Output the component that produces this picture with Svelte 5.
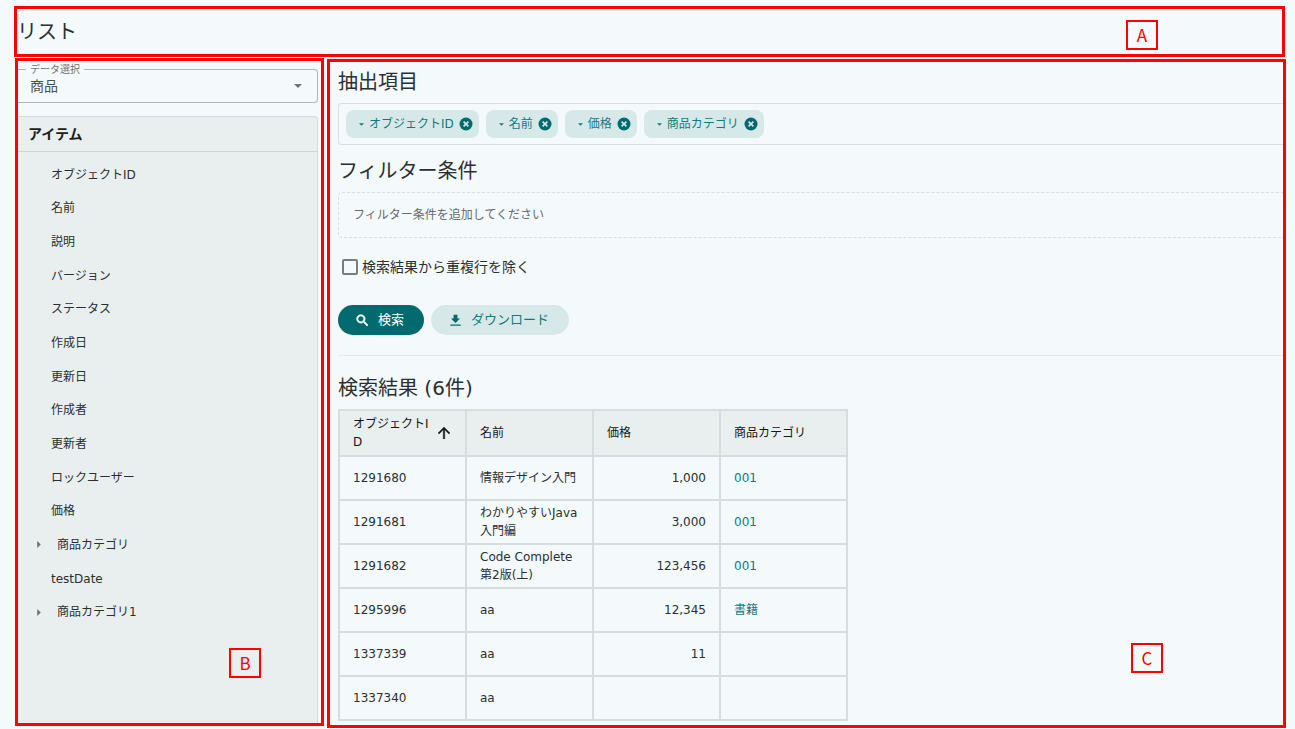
<script>
  let items = [
    { name: 'オブジェクトID' },
    { name: '名前' },
    { name: '説明' },
    { name: 'バージョン' },
    { name: 'ステータス' },
    { name: '作成日' },
    { name: '更新日' },
    { name: '作成者' },
    { name: '更新者' },
    { name: 'ロックユーザー' },
    { name: '価格' },
    { name: '商品カテゴリ', nested: true },
    { name: 'testDate' },
    { name: '商品カテゴリ1', nested: true }
  ];

  let columns = $state(['オブジェクトID', '名前', '価格', '商品カテゴリ']);

  let rows = [
    { id: '1291680', name: '情報デザイン入門', price: '1,000', category: '001' },
    { id: '1291681', name: 'わかりやすいJava入門編', price: '3,000', category: '001' },
    { id: '1291682', name: 'Code Complete 第2版(上)', price: '123,456', category: '001' },
    { id: '1295996', name: 'aa', price: '12,345', category: '書籍' },
    { id: '1337339', name: 'aa', price: '11', category: '' },
    { id: '1337340', name: 'aa', price: '', category: '' }
  ];

  let distinct = $state(false);

  function removeColumn(column) {
    columns = columns.filter((c) => c !== column);
  }
</script>

<div class="page">
  <header class="frame title-bar">
    <h1>リスト</h1>
    <span class="mark mark-a">A</span>
  </header>

  <div class="body">
    <aside class="frame sidebar">
      <div class="select-field">
        <label for="data-select">データ選択</label>
        <select id="data-select">
          <option>商品</option>
        </select>
        <svg class="select-arrow" viewBox="0 0 8 4" width="8" height="4"><path d="M0 0h8L4 4z" /></svg>
      </div>

      <div class="panel">
        <h2 class="panel-title">アイテム</h2>
        <ul class="item-list">
          {#each items as item}
            <li class:nested={item.nested}>
              {#if item.nested}
                <svg viewBox="0 0 4 8" width="4" height="7"><path d="M0 0l4 4-4 4z" /></svg>
              {/if}
              <span>{item.name}</span>
            </li>
          {/each}
        </ul>
      </div>
      <span class="mark mark-b">B</span>
    </aside>

    <main class="frame content">
      <h2>抽出項目</h2>
      <div class="chips">
        {#each columns as column (column)}
          <div class="chip">
            <svg class="caret" viewBox="0 0 6 3" width="5" height="3"><path d="M0 0h6L3 3z" /></svg>
            <span>{column}</span>
            <button type="button" aria-label="{column}を削除" onclick={() => removeColumn(column)}>
              <svg viewBox="0 0 14 14" width="14" height="14">
                <circle cx="7" cy="7" r="6.5" fill="#006a6f" />
                <path d="M4.6 4.6l4.8 4.8M9.4 4.6L4.6 9.4" stroke="#d6e9e8" stroke-width="1.6" />
              </svg>
            </button>
          </div>
        {/each}
      </div>

      <h2>フィルター条件</h2>
      <div class="filter-box">フィルター条件を追加してください</div>

      <label class="distinct">
        <input type="checkbox" bind:checked={distinct} />
        検索結果から重複行を除く
      </label>

      <div class="actions">
        <button type="button" class="btn primary">
          <svg viewBox="2 2 20 20" width="13" height="13"><path d="M15.5 14h-.79l-.28-.27A6.471 6.471 0 0 0 16 9.5 6.5 6.5 0 1 0 9.5 16c1.61 0 3.09-.59 4.23-1.57l.27.28v.79l5 4.99L20.49 19l-4.99-5zm-6 0C7.01 14 5 11.99 5 9.5S7.01 5 9.5 5 14 7.01 14 9.5 11.99 14 9.5 14z" stroke="currentColor" /></svg>
          検索
        </button>
        <button type="button" class="btn secondary">
          <svg viewBox="2 2 20 20" width="13" height="13"><path d="M19 9h-4V3H9v6H5l7 7 7-7zM4 18v2h16v-2H4z" /></svg>
          ダウンロード
        </button>
      </div>

      <hr />

      <h2>検索結果 (6件)</h2>
      <table>
        <thead>
          <tr>
            <th>
              <div class="sorted">
                <span>オブジェクトID</span>
                <svg viewBox="4 4 16 16" width="12" height="12"><path d="M4 12l1.41 1.41L11 7.83V20h2V7.83l5.58 5.59L20 12l-8-8-8 8z" stroke="currentColor" stroke-width=".5" /></svg>
              </div>
            </th>
            <th>名前</th>
            <th>価格</th>
            <th>商品カテゴリ</th>
          </tr>
        </thead>
        <tbody>
          {#each rows as row}
            <tr>
              <td>{row.id}</td>
              <td>{row.name}</td>
              <td class="number">{row.price}</td>
              <td>
                {#if row.category}
                  <a href="#category">{row.category}</a>
                {/if}
              </td>
            </tr>
          {/each}
        </tbody>
      </table>
      <span class="mark mark-c">C</span>
    </main>
  </div>
</div>

<style>
:global(body) {
  background: #f4f9fc;
}
.page {
  padding: 6px 10px 1px 14px;
  color: #2b2f30;
  font-family: "DejaVu Sans", "Noto Sans CJK JP", sans-serif;
  font-size: 12px;
  line-height: 18px;
}
.page * {
  box-sizing: border-box;
}
.frame {
  position: relative;
  border: 3px solid #f00;
}
h1,
h2 {
  margin: 0;
  font-size: 20px;
  font-weight: 400;
  line-height: 28px;
}
button,
select,
input {
  font: inherit;
  margin: 0;
}
svg {
  display: block;
  flex: none;
  fill: currentColor;
}
.title-bar {
  padding: 9px 0 8px;
}
.body {
  display: grid;
  grid-template-columns: 309px 1fr;
  gap: 3px;
  margin: 1px -1px 0 1px;
}

/* left column */
.sidebar {
  display: flex;
  flex-direction: column;
  padding: 8px 3px 0 0;
  margin-bottom: 2px;
}
.select-field {
  position: relative;
  margin-bottom: 13px;
}
.select-field label {
  position: absolute;
  top: -8px;
  left: 8px;
  padding: 0 4px;
  background: #f4f9fc;
  color: #6b7071;
  font-size: 10px;
  line-height: 18px;
}
.select-field select {
  display: block;
  appearance: none;
  width: 100%;
  height: 34px;
  padding: 0 12px;
  border: 1px solid #b0b5b6;
  border-left: 0;
  border-radius: 0 4px 4px 0;
  background: transparent;
  color: #4a4f50;
  font-size: 14px;
}
.select-arrow {
  position: absolute;
  right: 16px;
  top: 15px;
  color: #6b7071;
}
.panel {
  flex: 1;
  display: flex;
  flex-direction: column;
  border: 1px solid #d5dadb;
  border-width: 1px 1px 0 0;
  border-top-right-radius: 4px;
  background: #e9eeee;
}
.panel-title {
  padding: 3px 10px;
  border-bottom: 1px solid #d0d6d7;
  color: #1c2021;
  font-size: 14px;
  font-weight: 700;
}
.item-list {
  flex: 1;
  display: grid;
  grid-auto-rows: 1fr;
  margin: 0;
  padding: 6px 0 94px 33px;
  list-style: none;
}
.item-list li {
  display: flex;
  align-items: center;
}
.item-list .nested {
  gap: 16px;
  margin-left: -14px;
}
.item-list svg {
  color: #6b7071;
}

/* right column */
.content {
  margin-top: 1px;
  padding: 6px 0 4px 8px;
}
.content h2 {
  margin-bottom: 7px;
}
.chips {
  display: flex;
  flex-wrap: wrap;
  gap: 7px;
  margin-bottom: 12px;
  padding: 6px 7px;
  border: 1px solid #d9dedf;
  border-right: 0;
  border-radius: 4px 0 0 4px;
}
.chip {
  display: flex;
  align-items: center;
  gap: 5px;
  height: 28px;
  padding: 0 6px 0 13px;
  border-radius: 8px;
  background: #d6e9e8;
  color: #14797c;
}
.chip button {
  padding: 0;
  border: 0;
  background: none;
  cursor: pointer;
}
.filter-box {
  padding: 13px 14px;
  border: 1px dashed #d9dedf;
  border-right: 0;
  border-radius: 4px 0 0 4px;
  color: #666b6c;
}
.distinct {
  display: flex;
  align-items: center;
  gap: 4px;
  margin: 19px 0 28px 4px;
  font-size: 14px;
  line-height: 20px;
}
.distinct input {
  appearance: none;
  width: 16px;
  height: 16px;
  border: 2px solid #787c7d;
  border-radius: 2px;
}
.distinct input:checked {
  background: #006a6f;
}
.actions {
  display: flex;
  gap: 7px;
}
.btn {
  display: flex;
  align-items: center;
  gap: 9px;
  height: 30px;
  padding: 0 20px 0 18px;
  border: 0;
  border-radius: 15px;
  font-size: 13px;
  cursor: pointer;
}
.primary {
  background: #006a6f;
  color: #fff;
}
.secondary {
  background: #d6e9e8;
  color: #14797c;
}
.secondary svg {
  color: #006a6f;
}
hr {
  margin: 20px 0 18px;
  border: 0;
  border-top: 1px solid #e4e9ea;
}
table {
  width: 510px;
  border-collapse: collapse;
  table-layout: fixed;
}
th,
td {
  height: 44px;
  padding: 0 13px;
  border: 2px solid #d7dcdc;
  text-align: left;
  word-break: break-all;
}
th {
  height: 46px;
  background: #e9eeee;
  color: #141718;
  font-weight: 400;
}
.sorted {
  display: flex;
  align-items: center;
  gap: 7px;
}
.sorted span {
  width: 78px;
}
.number {
  text-align: right;
}
a {
  color: #14797c;
  text-decoration: none;
}

/* area marks */
.mark {
  position: absolute;
  width: 32px;
  height: 30px;
  border: 2px solid #f00;
  color: #f00;
  font-family: "Noto Sans CJK JP", sans-serif;
  font-size: 17px;
  line-height: 26px;
  text-align: center;
}
.mark-a {
  top: 11px;
  right: 124px;
}
.mark-b {
  right: 60px;
  bottom: 45px;
}
.mark-c {
  right: 120px;
  bottom: 52px;
}
</style>
